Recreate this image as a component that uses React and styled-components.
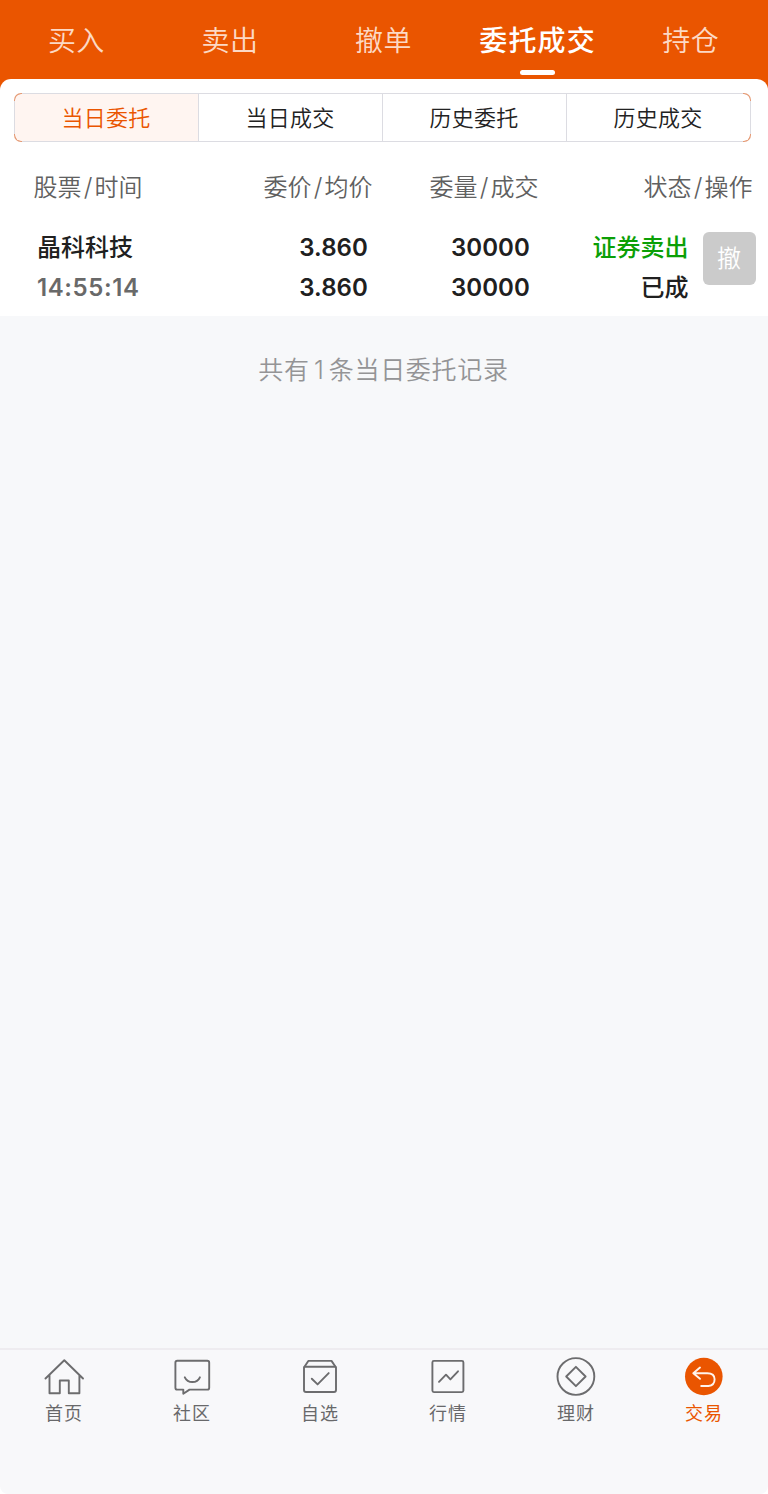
import React from "react";
import styled, { createGlobalStyle } from "styled-components";

const GlobalStyle = createGlobalStyle`
  * {
    box-sizing: border-box;
  }

  body {
    margin: 0;
    background: #ffffff;
    font-family: Inter, "Noto Sans CJK SC", sans-serif;
  }
`;

const Page = styled.div`
  display: flex;
  flex-direction: column;
  width: 768px;
  height: 1494px;
  background: #ffffff;
`;

const Top = styled.div`
  height: 96px;
  margin-bottom: -17px;
  background: #ea5500;
`;

const TopTabs = styled.div`
  display: grid;
  grid-template-columns: repeat(5, 1fr);
  height: 79px;
`;

const TopTab = styled.div`
  display: flex;
  flex-direction: column;
  align-items: center;
  padding-top: 20px;
  font-family: "Noto Sans CJK SC", sans-serif;
  font-size: 28px;
  line-height: 38px;
  letter-spacing: ${props => (props.$active ? "1.2px" : "0.4px")};
  white-space: nowrap;
  font-weight: ${props => (props.$active ? 500 : 350)};
  color: ${props => (props.$active ? "#ffffff" : "#fcd9c5")};

  ${props => !props.$active && "padding-right: 1px;"}
`;

const Underline = styled.div`
  width: 35px;
  height: 5px;
  margin-top: 12px;
  border-radius: 3px;
  background: #ffffff;
`;

const Panel = styled.div`
  height: 237px;
  padding-top: 14px;
  border-radius: 11px 11px 0 0;
  background: #ffffff;
`;

/* the corners pick up the accent, the straight edges stay grey */
const Segments = styled.div`
  display: grid;
  grid-template-columns: 184px 184px 184px 1fr;
  width: 737px;
  height: 49px;
  margin-left: 14px;
  border: 1px solid transparent;
  border-radius: 7px;
  overflow: hidden;
  background:
    linear-gradient(#dcdce2, #dcdce2) 8px 0 / calc(100% - 16px) 100% no-repeat
      border-box,
    linear-gradient(#dcdce2, #dcdce2) 0 8px / 100% calc(100% - 16px) no-repeat
      border-box,
    #e59a74 border-box;
`;

const Segment = styled.div`
  display: flex;
  justify-content: center;
  padding-right: 1px;
  border-right: 1px solid #dcdce2;
  font-family: "Noto Sans CJK SC", sans-serif;
  font-size: 22px;
  font-weight: 350;
  line-height: 45px;
  letter-spacing: 0.2px;
  color: ${props => (props.$active ? "#ea5500" : "#222222")};
  background: ${props => (props.$active ? "#fff5f1" : "#ffffff")};

  &:first-child {
    border-radius: 6px 0 0 6px;
  }

  &:last-child {
    border-right: 0;
    border-radius: 0 6px 6px 0;
  }
`;

const columns = "200px 172.5px 166px 214px";

const Head = styled.div`
  display: grid;
  grid-template-columns: ${columns};
  height: 36px;
  margin-top: 26px;
  font-family: "Noto Sans CJK SC", sans-serif;
  font-size: 24px;
  font-weight: 350;
  line-height: 36px;
  color: #606060;
`;

const HeadCell = styled.div`
  text-align: right;

  &:first-child {
    padding-left: 33.5px;
    text-align: left;
  }
`;

const Slash = styled.span`
  display: inline-block;
  width: 13px;
  font-family: Inter, sans-serif;
  font-size: 25px;
  line-height: 24px;
  text-align: center;
`;

const Row = styled.div`
  display: grid;
  grid-template-columns: 200px 168px 162px 158.5px 67.5px;
  margin-top: 24px;
`;

const Cell = styled.div`
  display: flex;
  flex-direction: column;
  align-items: flex-end;
  font-size: 24px;
  font-weight: 500;
  line-height: 40px;
  color: #202020;

  &:first-child {
    align-items: flex-start;
    padding-left: 37px;
  }
`;

const Num = styled.div`
  height: 40px;
  font-weight: 600;
  letter-spacing: ${props => props.$spacing || "0.1px"};
  color: ${props => (props.$muted ? "#696969" : "#202020")};
`;

const Name = styled.div`
  height: 40px;
  color: ${props => (props.$sell ? "#0b9f06" : "#202020")};
`;

const Cancel = styled.button`
  width: 53px;
  height: 53px;
  margin: 4px 0 0 14.5px;
  padding: 0 1px 3px 0;
  border: 0;
  border-radius: 6px;
  background: #cbcbcb;
  color: #ffffff;
  font-family: "Noto Sans CJK SC", sans-serif;
  font-size: 24px;
  font-weight: 350;
  line-height: 50px;
`;

const Content = styled.div`
  flex: 1;
  padding: 33px 1px 0 0;
  background: #f7f8fa;
  font-family: "Noto Sans CJK SC", sans-serif;
  font-size: 25px;
  font-weight: 350;
  line-height: 38px;
  letter-spacing: 0.7px;
  text-align: center;
  color: #949496;
`;

const Count = styled.span`
  display: inline-block;
  width: 19px;
  font-family: Inter, sans-serif;
`;

const TabBar = styled.div`
  display: grid;
  grid-template-columns: repeat(6, 1fr);
  height: 146px;
  border-top: 2px solid #eeecf0;
  border-radius: 0 0 8px 8px;
  background: #f8f8fa;
`;

const Tab = styled.div`
  display: flex;
  flex-direction: column;
  align-items: center;
  padding-top: 7px;
  font-family: "Noto Sans CJK SC", sans-serif;
  font-size: 18px;
  font-weight: 400;
  line-height: 26px;
  letter-spacing: 1px;
  color: ${props => (props.$active ? "#ea5500" : "#68686a")};
`;

const Icon = styled.svg`
  width: 40px;
  height: 40px;
  margin-bottom: 2px;
  fill: none;
  stroke: #6c6c6e;
  stroke-width: 1.9;
  stroke-linejoin: round;
  stroke-linecap: round;
`;

const topTabs = ["买入", "卖出", "撤单", "委托成交", "持仓"];
const segments = ["当日委托", "当日成交", "历史委托", "历史成交"];
const heads = [["股票", "时间"], ["委价", "均价"], ["委量", "成交"], ["状态", "操作"]];

const tabs = [
  {
    label: "首页",
    icon: (
      <path d="M1.5 21.5 20.3 3.2 39 21.5M5.5 18v18.3H15.8V23.5h9v12.8H35.4V18" />
    )
  },
  {
    label: "社区",
    icon: (
      <>
        <path d="M5.3 3.8h30q1.9 0 1.9 1.9v25q0 1.9-1.9 1.9H17.5L11.3 36.7V32.6H5.3q-1.9 0-1.9-1.9V5.7q0-1.9 1.9-1.9Z" />
        <path d="M12.8 20.3Q15 25 20.4 25T27.9 20.3" />
      </>
    )
  },
  {
    label: "自选",
    icon: (
      <>
        <path d="M4 10.5 8.3 3.9H31.5L36 10.5V33q0 2-2 2H6q-2 0-2-2V10.5Z" />
        <path d="M4.5 9.7h31M11.8 21.7l5.8 5.7L28.7 16.1" />
      </>
    )
  },
  {
    label: "行情",
    icon: (
      <>
        <rect x="4.4" y="3.9" width="31" height="31.2" rx="1.5" />
        <path d="M11 24.8 18 17.7 22.4 22.4 30 14.3" />
      </>
    )
  },
  {
    label: "理财",
    icon: (
      <>
        <circle cx="19.9" cy="19.5" r="18.4" />
        <path d="M19.9 9.8 29.6 19.5 19.9 29.2 10.2 19.5Z" />
      </>
    )
  },
  {
    label: "交易",
    icon: (
      <>
        <circle cx="19.8" cy="19.5" r="18.8" fill="#ea5500" stroke="none" />
        <path
          d="M16 10.5 9.3 16.2 16 21.8M9.3 16.2H23.3Q30.6 16.2 30.6 22.3T24.5 29H17.2"
          stroke="#fff4ec"
        />
      </>
    )
  }
];

export default function App() {
  return (
    <Page>
      <GlobalStyle />
      <Top>
        <TopTabs>
          {topTabs.map(tab => (
            <TopTab key={tab} $active={tab === "委托成交"}>
              {tab}
              {tab === "委托成交" && <Underline />}
            </TopTab>
          ))}
        </TopTabs>
      </Top>
      <Panel>
        <Segments>
          {segments.map((segment, i) => (
            <Segment key={segment} $active={i === 0}>
              {segment}
            </Segment>
          ))}
        </Segments>
        <Head>
          {heads.map(([first, second]) => (
            <HeadCell key={first}>
              {first}
              <Slash>/</Slash>
              {second}
            </HeadCell>
          ))}
        </Head>
        <Row>
          <Cell>
            <Name>晶科科技</Name>
            <Num $muted $spacing="0.6px">
              14:55:14
            </Num>
          </Cell>
          <Cell>
            <Num>3.860</Num>
            <Num>3.860</Num>
          </Cell>
          <Cell>
            <Num>30000</Num>
            <Num>30000</Num>
          </Cell>
          <Cell>
            <Name $sell>证券卖出</Name>
            <Name>已成</Name>
          </Cell>
          <Cancel>撤</Cancel>
        </Row>
      </Panel>
      <Content>
        共有<Count>1</Count>条当日委托记录
      </Content>
      <TabBar>
        {tabs.map(({ label, icon }) => (
          <Tab key={label} $active={label === "交易"}>
            <Icon viewBox="0 0 40 40">{icon}</Icon>
            {label}
          </Tab>
        ))}
      </TabBar>
    </Page>
  );
}
